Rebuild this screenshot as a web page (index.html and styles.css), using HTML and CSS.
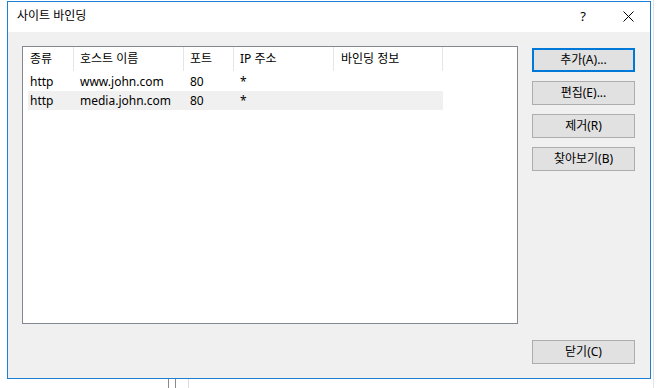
FILE: index.html
```html
<!DOCTYPE html>
<html lang="ko">
<head>
<meta charset="utf-8">
<title>사이트 바인딩</title>
<link rel="stylesheet" href="styles.css">
</head>
<body>
<div class="bg-line bg-right"></div>
<div class="bg-line bg-b1"></div>
<div class="bg-line bg-b2"></div>
<div class="bg-line bg-b3"></div>
<div class="dialog">
  <div class="titlebar">
    <span class="title">사이트 바인딩</span>
    <span class="help">?</span>
    <span class="close"><svg width="11" height="11" viewBox="0 0 11 11"><path d="M0.5 0.5 L10.5 10.5 M10.5 0.5 L0.5 10.5" stroke="#000" stroke-width="1" fill="none"/></svg></span>
  </div>
  <div class="content">
    <div class="list">
      <div class="grid header">
        <div class="cell">종류</div>
        <div class="cell">호스트 이름</div>
        <div class="cell">포트</div>
        <div class="cell">IP 주소</div>
        <div class="cell">바인딩 정보</div>
      </div>
      <div class="grid row">
        <div class="cell">http</div>
        <div class="cell">www.john.com</div>
        <div class="cell">80</div>
        <div class="cell">*</div>
        <div class="cell"></div>
      </div>
      <div class="grid row alt">
        <div class="cell">http</div>
        <div class="cell">media.john.com</div>
        <div class="cell">80</div>
        <div class="cell">*</div>
        <div class="cell"></div>
      </div>
    </div>
    <div class="buttons">
      <button class="btn focused">추가(A)...</button>
      <button class="btn">편집(E)...</button>
      <button class="btn">제거(R)</button>
      <button class="btn">찾아보기(B)</button>
      <button class="btn close-btn">닫기(C)</button>
    </div>
  </div>
</div>
</body>
</html>
```

FILE: styles.css
```css
html, body {
  margin: 0;
  padding: 0;
  background: #ffffff;
  width: 659px;
  height: 388px;
  overflow: hidden;
}

body {
  position: relative;
  font-family: "Noto Sans", "Noto Sans CJK KR", sans-serif;
  font-size: 12px;
  color: #000;
}

.bg-line {
  position: absolute;
  width: 1px;
}
.bg-right { left: 653px; top: 0; height: 388px; background: #e3e3e3; }
.bg-b1 { left: 168px; top: 379px; height: 9px; background: #8a8a8a; }
.bg-b2 { left: 175px; top: 379px; height: 9px; background: #8a8a8a; }
.bg-b3 { left: 188px; top: 379px; height: 9px; background: #dcdcdc; }

.dialog {
  margin: 1px 0 0 7px;
  width: 644px;
  height: 378px;
  box-sizing: border-box;
  border: 1px solid #1c7fd6;
  display: flex;
  flex-direction: column;
  background: #f0f0f0;
}

.titlebar {
  height: 30px;
  background: #ffffff;
  display: flex;
  align-items: center;
  flex: none;
}
.title {
  padding-left: 9px;
  flex: 1;
  line-height: 16px;
  margin-top: -2px;
}
.help {
  width: 12px;
  text-align: center;
  margin-right: 34px;
  font-size: 13px;
  margin-top: -2px;
}
.close {
  width: 11px;
  height: 11px;
  margin-right: 16px;
  margin-top: -2px;
  display: flex;
}

.content {
  flex: 1;
  display: flex;
  padding: 14px 15px 14px 14px;
}

.list {
  width: 496px;
  height: 278px;
  box-sizing: border-box;
  border: 1px solid #828790;
  background: #ffffff;
  padding-left: 5px;
  flex: none;
}

.grid {
  display: grid;
  width: 415px;
  grid-template-columns: 46px 110px 50px 100px 109px;
}
.header {
  height: 25px;
}
.header .cell {
  border-right: 1px solid #e5e5e5;
  height: 24px;
  line-height: 24px;
  box-sizing: border-box;
}
.cell {
  padding-left: 6px;
  white-space: nowrap;
  overflow: hidden;
  box-sizing: border-box;
}
.grid .cell:first-child {
  padding-left: 2px;
}
.header .cell:last-child {
  padding-left: 7px;
}
.row {
  height: 19px;
  line-height: 19px;
}
.row.alt {
  background: #f0f0f0;
}

.buttons {
  margin-left: 14px;
  width: 103px;
  display: flex;
  flex-direction: column;
  gap: 9px;
  padding-top: 2px;
}
.btn {
  height: 24px;
  box-sizing: border-box;
  border: 1px solid #adadad;
  background: #e1e1e1;
  font-family: "Noto Sans", "Noto Sans CJK KR", sans-serif;
  font-size: 12px;
  color: #000;
  padding: 0;
  line-height: 20px;
}
.btn.focused {
  border: 2px solid #0078d7;
}
.close-btn {
  margin-top: auto;
}
```
